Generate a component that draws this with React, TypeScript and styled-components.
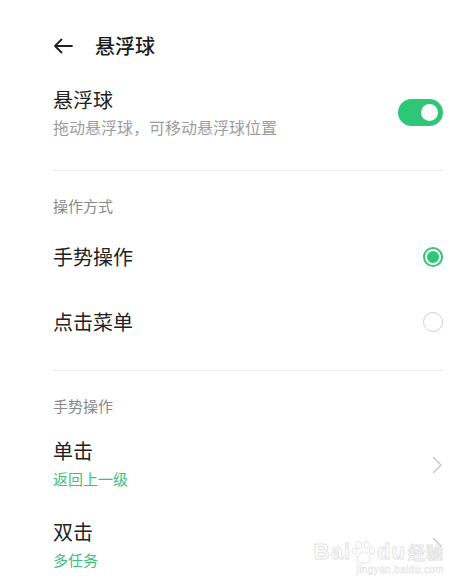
import styled, { createGlobalStyle } from 'styled-components';

const GlobalStyle = createGlobalStyle`
  body {
    margin: 0;
    background: #ffffff;
    font-family: "Noto Sans CJK SC", "Noto Sans", sans-serif;
    color: #222222;
  }
`;

const GREEN = '#2ec778';

const Page = styled.div`
  position: relative;
  width: 471px;
  height: 587px;
  overflow: hidden;
  padding: 0 28px 0 53px;
  box-sizing: border-box;
`;

const Header = styled.div`
  height: 88px;
  display: flex;
  align-items: center;
  gap: 22px;
  padding-top: 4px;
  box-sizing: border-box;
`;

const Title = styled.h1`
  margin: 0;
  font-size: 20px;
  line-height: 26px;
  font-weight: 500;
  color: #1c1c1c;
`;

const SwitchRow = styled.div`
  display: flex;
  align-items: center;
  justify-content: space-between;
  padding-bottom: 33px;
  border-bottom: 1px solid #ececec;
`;

const TextBlock = styled.div<{ $gap?: number }>`
  display: flex;
  flex-direction: column;
  gap: ${(p) => p.$gap ?? 0}px;
`;

const ItemTitle = styled.div<{ $lh?: number }>`
  font-size: 20px;
  line-height: ${(p) => p.$lh ?? 26}px;
  color: #222222;
`;

const ItemSub = styled.div<{ $green?: boolean }>`
  font-size: ${(p) => (p.$green ? 15 : 16)}px;
  line-height: ${(p) => (p.$green ? 24 : 20)}px;
  color: ${(p) => (p.$green ? '#3dbf7f' : '#9d9d9d')};
`;

const Toggle = styled.div`
  width: 45px;
  height: 27px;
  border-radius: 14px;
  background: ${GREEN};
  display: flex;
  align-items: center;
  justify-content: flex-end;
  padding-right: 5px;
  box-sizing: border-box;
`;

const Knob = styled.div`
  width: 17px;
  height: 17px;
  border-radius: 50%;
  background: #ffffff;
`;

const Section = styled.div<{ $divider?: boolean }>`
  border-bottom: ${(p) => (p.$divider ? '1px solid #ececec' : 'none')};
  padding-bottom: ${(p) => (p.$divider ? 16 : 0)}px;
`;

const SectionHeader = styled.div`
  padding: 25px 0 8px;
  font-size: 15px;
  line-height: 20px;
  color: #888888;
`;

const OptionRow = styled.div`
  height: 65px;
  display: flex;
  align-items: center;
  justify-content: space-between;
`;

const Radio = styled.div<{ $on?: boolean }>`
  width: 20px;
  height: 20px;
  border-radius: 50%;
  box-sizing: border-box;
  border: ${(p) => (p.$on ? `2px solid ${GREEN}` : '1.5px solid #cfcfcf')};
  display: flex;
  align-items: center;
  justify-content: center;
  &::after {
    content: '';
    display: ${(p) => (p.$on ? 'block' : 'none')};
    width: 12px;
    height: 12px;
    border-radius: 50%;
    background: ${GREEN};
  }
`;

const NavRow = styled.div`
  display: flex;
  align-items: center;
  justify-content: space-between;
  padding: 14px 0 14px;
`;

const Watermark = styled.div`
  position: absolute;
  right: 27px;
  bottom: 11px;
  display: flex;
  flex-direction: column;
  align-items: flex-end;
  color: #ffffff;
  -webkit-text-stroke: 1px #e4e4e4;
  font-family: "Liberation Sans", Arial, sans-serif;
  pointer-events: none;
`;

const MarkTop = styled.div`
  display: flex;
  align-items: flex-end;
  font-size: 22px;
  line-height: 24px;
  font-weight: 700;
  letter-spacing: 1px;
`;

const MarkCn = styled.span`
  font-family: "Noto Sans CJK SC", sans-serif;
  font-size: 17px;
  margin-left: 2px;
`;

const MarkUrl = styled.div`
  font-size: 10px;
  line-height: 12px;
  letter-spacing: 0.4px;
  -webkit-text-stroke: 0.5px #e2e2e2;
`;

const BackArrow = () => (
  <svg width="20" height="16" viewBox="0 0 20 16" fill="none">
    <path d="M19 8H2M8.5 1.5L2 8l6.5 6.5" stroke="#1f1f1f" strokeWidth="1.8" strokeLinecap="round" strokeLinejoin="round" />
  </svg>
);

const Chevron = () => (
  <svg width="11" height="18" viewBox="0 0 11 18" fill="none">
    <path d="M1.5 1.5L9 9l-7.5 7.5" stroke="#c8c8c8" strokeWidth="1.5" strokeLinecap="round" strokeLinejoin="round" />
  </svg>
);

const Paw = () => (
  <svg width="26" height="24" viewBox="0 0 26 24" fill="#ffffff" stroke="#e4e4e4" strokeWidth="1">
    <ellipse cx="8" cy="5" rx="3" ry="3.6" />
    <ellipse cx="16" cy="5" rx="3" ry="3.6" />
    <ellipse cx="3.5" cy="11" rx="2.6" ry="3.2" />
    <ellipse cx="21" cy="11" rx="2.6" ry="3.2" />
    <path d="M6 20c0-5 3-8 6.5-8s6.5 3 6.5 8c0 2-1.5 3-3.5 3h-6C7.5 23 6 22 6 20z" />
  </svg>
);

const gestures = [
  { title: '单击', action: '返回上一级' },
  { title: '双击', action: '多任务' },
];

export default function App() {
  return (
    <Page>
      <GlobalStyle />
      <Header>
        <BackArrow />
        <Title>悬浮球</Title>
      </Header>

      <SwitchRow>
        <TextBlock $gap={5}>
          <ItemTitle $lh={24}>悬浮球</ItemTitle>
          <ItemSub>拖动悬浮球，可移动悬浮球位置</ItemSub>
        </TextBlock>
        <Toggle>
          <Knob />
        </Toggle>
      </SwitchRow>

      <Section $divider>
        <SectionHeader>操作方式</SectionHeader>
        <OptionRow>
          <ItemTitle>手势操作</ItemTitle>
          <Radio $on />
        </OptionRow>
        <OptionRow>
          <ItemTitle>点击菜单</ItemTitle>
          <Radio />
        </OptionRow>
      </Section>

      <Section>
        <SectionHeader>手势操作</SectionHeader>
        {gestures.map((g) => (
          <NavRow key={g.title}>
            <TextBlock $gap={3}>
              <ItemTitle $lh={26}>{g.title}</ItemTitle>
              <ItemSub $green>{g.action}</ItemSub>
            </TextBlock>
            <Chevron />
          </NavRow>
        ))}
      </Section>

      <Watermark>
        <MarkTop>
          Bai
          <Paw />
          du
          <MarkCn>经验</MarkCn>
        </MarkTop>
        <MarkUrl>jingyan.baidu.com</MarkUrl>
      </Watermark>
    </Page>
  );
}
